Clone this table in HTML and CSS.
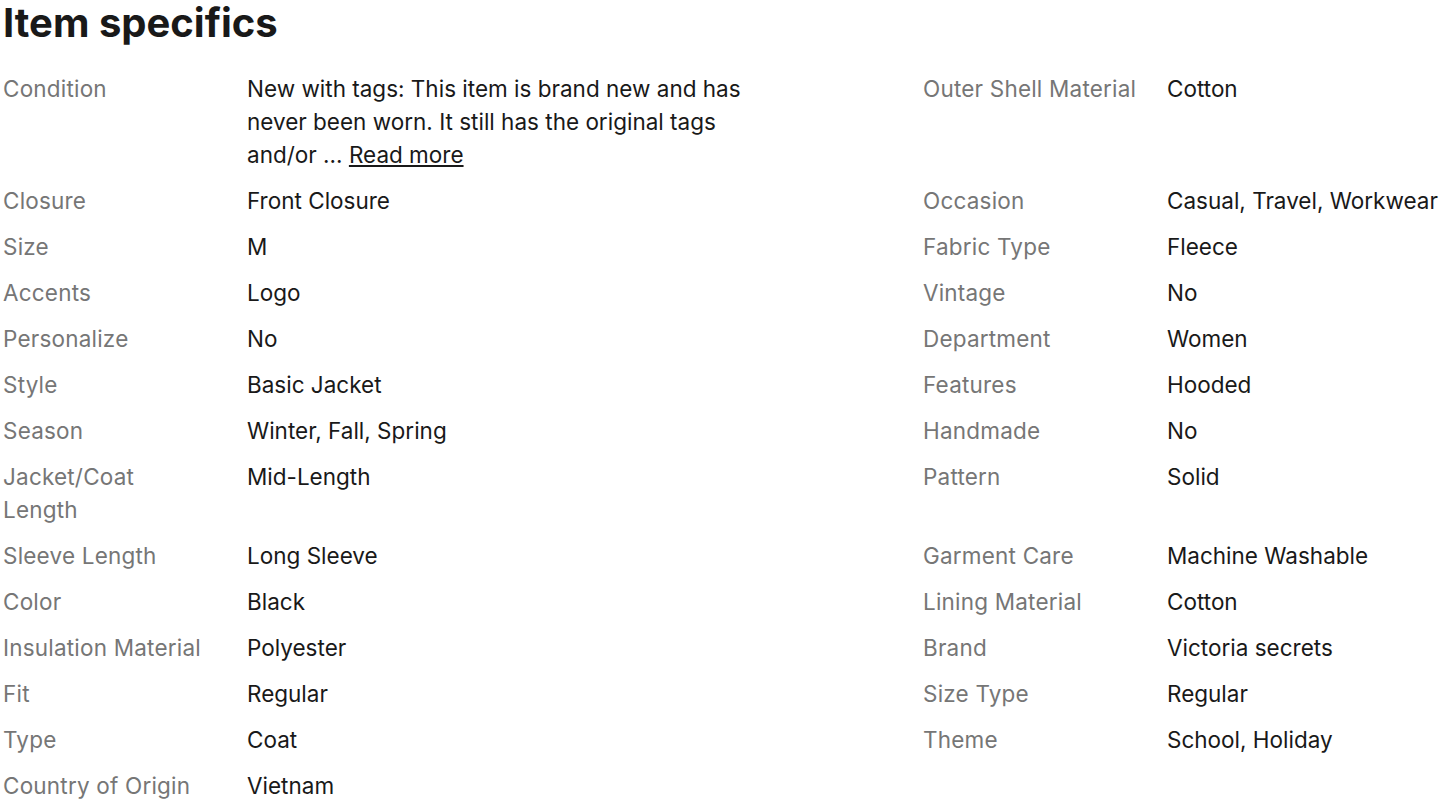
FILE: index.html
```html
<!DOCTYPE html>
<html lang="en">
<head>
    <meta charset="UTF-8">
    <meta name="viewport" content="width=device-width, initial-scale=1.0">
    <title>Item specifics</title>
    <link rel="stylesheet" href="styles.css">
</head>
<body>

    <!-- 商品属性 -->
    <section class="specs">
        <h2 class="specs-title">Item specifics</h2>

        <div class="specs-grid">
            <div class="label">Condition</div>
            <div class="value value-wrap">New with tags: This item is brand new and has never been worn. It still has the original tags and/or ... <a href="#" class="read-more">Read more</a></div>
            <div class="label">Outer Shell Material</div>
            <div class="value">Cotton</div>

            <div class="label">Closure</div>
            <div class="value">Front Closure</div>
            <div class="label">Occasion</div>
            <div class="value">Casual, Travel, Workwear</div>

            <div class="label">Size</div>
            <div class="value">M</div>
            <div class="label">Fabric Type</div>
            <div class="value">Fleece</div>

            <div class="label">Accents</div>
            <div class="value">Logo</div>
            <div class="label">Vintage</div>
            <div class="value">No</div>

            <div class="label">Personalize</div>
            <div class="value">No</div>
            <div class="label">Department</div>
            <div class="value">Women</div>

            <div class="label">Style</div>
            <div class="value">Basic Jacket</div>
            <div class="label">Features</div>
            <div class="value">Hooded</div>

            <div class="label">Season</div>
            <div class="value">Winter, Fall, Spring</div>
            <div class="label">Handmade</div>
            <div class="value">No</div>

            <div class="label label-narrow">Jacket/Coat Length</div>
            <div class="value">Mid-Length</div>
            <div class="label">Pattern</div>
            <div class="value">Solid</div>

            <div class="label">Sleeve Length</div>
            <div class="value">Long Sleeve</div>
            <div class="label">Garment Care</div>
            <div class="value">Machine Washable</div>

            <div class="label">Color</div>
            <div class="value">Black</div>
            <div class="label">Lining Material</div>
            <div class="value">Cotton</div>

            <div class="label">Insulation Material</div>
            <div class="value">Polyester</div>
            <div class="label">Brand</div>
            <div class="value">Victoria secrets</div>

            <div class="label">Fit</div>
            <div class="value">Regular</div>
            <div class="label">Size Type</div>
            <div class="value">Regular</div>

            <div class="label">Type</div>
            <div class="value">Coat</div>
            <div class="label">Theme</div>
            <div class="value">School, Holiday</div>

            <div class="label">Country of Origin</div>
            <div class="value">Vietnam</div>
        </div>
    </section>

</body>
</html>
```

FILE: styles.css
```css
body {
    margin: 0;
    font-family: Inter, "Liberation Sans", Arial, sans-serif;
    color: #191919;
    background: #fff;
}

.specs {
    padding: 0 0 0 3px;
}

.specs-title {
    margin: 0 0 26px;
    font-size: 40px;
    line-height: 46px;
    font-weight: 700;
}

/* 两栏：标签 + 值 */
.specs-grid {
    display: grid;
    grid-template-columns: 244px 676px 244px 1fr;
    row-gap: 13px;
    font-size: 22.5px;
    line-height: 33px;
}

.label {
    color: #767676;
    letter-spacing: 0.2px;
}

.label-narrow {
    max-width: 160px;
}

.value {
    color: #191919;
    white-space: nowrap;
}

.value-wrap {
    white-space: normal;
    max-width: 520px;
}

.read-more {
    color: #191919;
    text-decoration: underline;
}
```
